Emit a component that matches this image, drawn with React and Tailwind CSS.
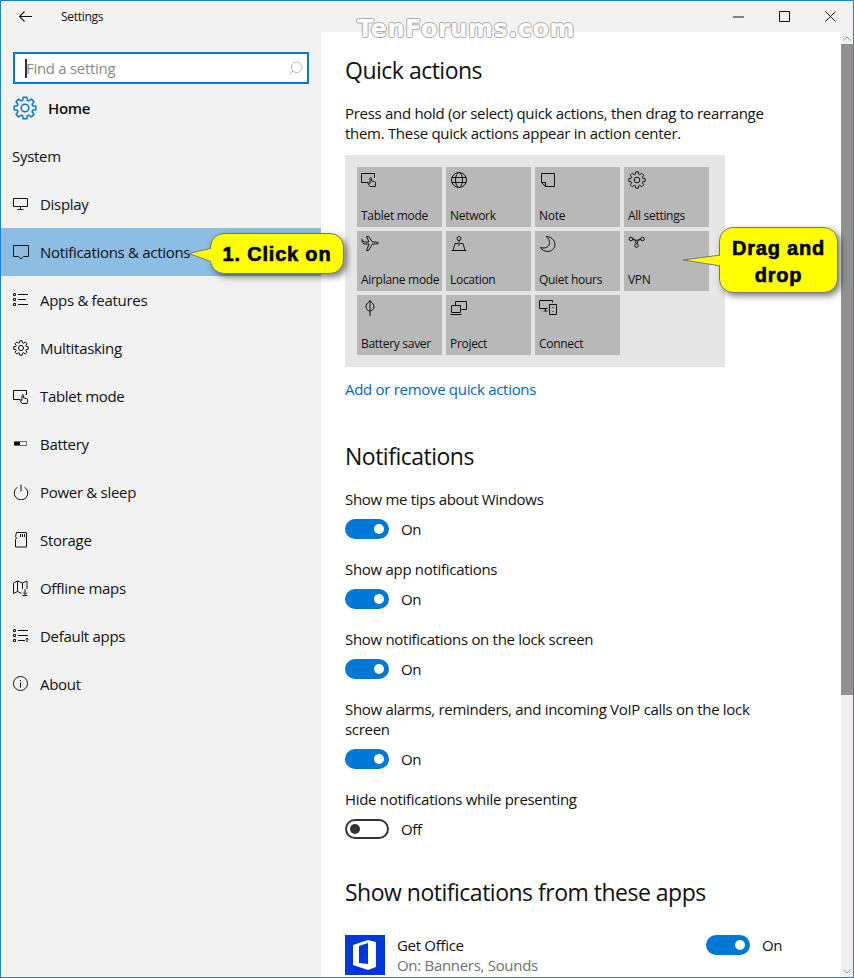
import { Search } from "lucide-react";

const gearPath = (() => {
  const pts = [];
  for (let i = 0; i < 8; i++) {
    const a = (i * Math.PI) / 4 - Math.PI / 2;
    [[-0.3, 8], [-0.17, 11], [0.17, 11], [0.3, 8]].forEach(([d, r]) => {
      pts.push((12 + r * Math.cos(a + d)).toFixed(2) + " " + (12 + r * Math.sin(a + d)).toFixed(2));
    });
  }
  return "M" + pts.join("L") + "z";
})();

const Gear = ({ size = 20, color = "#111", sw = 1.500 }) => (
  <svg width={size} height={size} viewBox="0 0 24 24" fill="none" stroke={color} strokeWidth={sw} strokeLinejoin="round">
    <path d={gearPath} />
    <circle cx="12" cy="12" r="3.800" />
  </svg>
);

const base = { width: 16, height: 16, viewBox: "0 0 16 16", fill: "none", stroke: "#111", strokeWidth: 1 };

const TabletIcon = () => (
  <svg {...base}>
    <path d="M7 11.500H.5v-9h13V7" />
    <path d="M9 15.500l-1.800-2.700c-.5-.9.5-1.500 1.200-.8l.6.6V7.500c0-1.200 1.600-1.200 1.600 0V10l3 .6c.8.2 1.100.8 1 1.600l-.4 3.300z" />
  </svg>
);
const icons = {
  display: (
    <svg {...base}><path d="M.5 2.500h14v8H.5zM7.500 10.500v3M4.500 13.500h6" /></svg>
  ),
  notif: (
    <svg {...base}><path d="M.5 1.500h15v11h-5l-2.500 2.500-2.500-2.500h-5z" /></svg>
  ),
  apps: (
    <svg {...base}><path d="M.5 1.500h2v2h-2zM.5 6.500h2v2h-2zM.5 11.500h2v2h-2zM5 2.500h10M5 7.500h8M5 12.500h10" /></svg>
  ),
  multi: <Gear size={16} />,
  tablet: <TabletIcon />,
  battery: (
    <svg {...base}><path d="M1.500 5.500h12v4h-12z" stroke="#666" /><path d="M1 7.500h6" stroke="#111" strokeWidth="3" /></svg>
  ),
  power: (
    <svg {...base}><path d="M4.500 3.200a6.800 6.800 0 1 0 7 0M8 .5v7" /></svg>
  ),
  storage: (
    <svg {...base}><path d="M3.500.5h10v14.500h-11V7.500l1-1.500-1-1.500zM7.500 2v3M9.500 2v3M11.500 2v3" /></svg>
  ),
  maps: (
    <svg {...base}><path d="M.5 3l4-2 5 2 4.500-2v8M.5 3v10.500l4-2 4 2M4.500 1v10.500M9.500 3v6M12 9v5M10 12.500l2 2 2-2M9.500 15.500h5" /></svg>
  ),
  defaults: (
    <svg {...base}><path d="M.5 1.500h2v2h-2zM.5 6.500h2v2h-2zM.5 11.500h2v2h-2zM5 2.500h10M5 7.500h10M5 12.500h7M14 14v-4M12.500 11.500L14 10l1.500 1.500" /></svg>
  ),
  about: (
    <svg {...base}><circle cx="7.500" cy="7.500" r="7" /><path d="M7.500 6.500v5M7.500 4v1.200" /></svg>
  ),
};

const navItems = [
  ["Display", icons.display],
  ["Notifications & actions", icons.notif, true],
  ["Apps & features", icons.apps],
  ["Multitasking", icons.multi],
  ["Tablet mode", icons.tablet],
  ["Battery", icons.battery],
  ["Power & sleep", icons.power],
  ["Storage", icons.storage],
  ["Offline maps", icons.maps],
  ["Default apps", icons.defaults],
  ["About", icons.about],
];

const t = { ...base, width: 18, height: 18, viewBox: "0 0 18 18" };
const tiles = [
  ["Tablet mode", <TabletIcon />],
  ["Network", <svg {...t}><circle cx="9" cy="9" r="7.500" /><ellipse cx="9" cy="9" rx="3.500" ry="7.500" /><path d="M2 6.500h14M2 11.500h14" /></svg>],
  ["Note", <svg {...t}><path d="M2.500 2.500h13v13h-9l-4-4zM2.500 11.500h4v4" /></svg>],
  ["All settings", <Gear size={18} sw={1.300} />],
  ["Airplane mode", <svg {...t}><path d="M1 6.500l2 2.500h5l-2.500 6.500h2l4-6.500h3c2 0 3-.5 3-1s-1-1-3-1h-3l-4-5.500h-2L8 7H3L1 4.500z" /></svg>],
  ["Location", <svg {...t}><circle cx="9" cy="3.500" r="2" /><path d="M9 5.500V11M1.500 15.500h15M3 15.500L5 8.500h3M10 8.500h3l2 7" /></svg>],
  ["Quiet hours", <svg {...t}><path d="M7 1.500c5 0 9 3.500 9 8 0 4-3.500 7-7.500 7-3 0-5.500-1.500-7-4 5 1.500 9-.5 9-5 0-2.500-1.500-4.500-3.500-6z" /></svg>],
  ["VPN", <svg {...t}><circle cx="3" cy="4" r="1.800" /><circle cx="14.500" cy="4" r="1.800" /><circle cx="8.500" cy="10.500" r="1.800" /><path d="M4.800 4c3 0 3 2 3.200 4.800M12.700 4c-3 0-2.500 1.500-3.500 4.700M4.800 4.500c2 1 5 1 7.900 0" /></svg>],
  ["Battery saver", <svg {...t}><path d="M9 2c3 2 4 4 4 6s-2 4-4 4-4-2-4-4 1-4 4-6zM9 1v16" /></svg>],
  ["Project", <svg {...t}><path d="M5.500 6V2.500h11v8h-5M1.500 6.500h9v7h-9zM.5 15.500h11" /></svg>],
  ["Connect", <svg {...t}><path d="M.5 1.500h13v2M.5 1.500v8h8M4.500 12h4M6.500 9.500V12M10.500 5.500h7v10h-7zM14 8v1M14 12v1" /></svg>],
];

const Toggle = ({ on = true }) => (
  <div className="flex items-center gap-3">
    {on ? (
      <div className="w-11 h-5 rounded-full bg-[#0078d7] flex items-center justify-end pr-[5px]">
        <div className="w-[10px] h-[10px] rounded-full bg-white" />
      </div>
    ) : (
      <div className="w-11 h-5 rounded-full border-2 border-[#333] flex items-center pl-[3px]">
        <div className="w-[10px] h-[10px] rounded-full bg-[#333]" />
      </div>
    )}
    <span className="text-[15px] leading-5 text-[#111]">{on ? "On" : "Off"}</span>
  </div>
);

const Setting = ({ label, on, className = "" }) => (
  <div className={"w-[410px] " + className}>
    <p className="text-[15px] leading-5 mb-[10px] text-[#111]">{label}</p>
    <Toggle on={on} />
  </div>
);

const Callout = ({ bodyClass, tail, children }) => (
  <>
    <div className={"absolute bg-[#ffff00] border border-[#777] rounded-[14px] shadow-[3px_3px_6px_rgba(0,0,0,0.5)] flex items-center justify-center text-center font-bold text-black text-[20px] leading-[27px] tracking-[0.8px] [-webkit-text-stroke:0.6px_black] " + bodyClass} style={{ fontFamily: '"Liberation Sans", sans-serif' }}>
      {children}
    </div>
    {tail}
  </>
);

export default function App() {
  return (
    <div className="relative w-[854px] h-[978px] overflow-hidden border border-[#1883d7] bg-[#f2f2f2] flex flex-col text-[#111] tracking-[-0.3px]" style={{ fontFamily: '"Open Sans", sans-serif' }}>
      <div className="h-[31px] shrink-0 flex items-center">
        <svg className="ml-[18px]" width="13" height="11" viewBox="0 0 13 11" fill="none" stroke="#111" strokeWidth="1.100"><path d="M5.500.5l-5 5 5 5M.5 5.500H13" /></svg>
        <span className="ml-[29px] text-xs">Settings</span>
        <div className="ml-auto flex items-center">
          <svg className="mr-[35px]" width="11" height="2" viewBox="0 0 11 2" stroke="#111"><path d="M0 1h11" /></svg>
          <svg className="mr-[35px]" width="11" height="11" viewBox="0 0 11 11" fill="none" stroke="#111"><path d="M.5.5h10v10H.5z" /></svg>
          <svg className="mr-[17px]" width="11" height="11" viewBox="0 0 11 11" fill="none" stroke="#111"><path d="M.5.5l10 10M10.500.5l-10 10" /></svg>
        </div>
      </div>

      <div className="flex flex-1 min-h-0">
        <aside className="w-[320px] shrink-0">
          <div className="mx-3 mt-[20px] h-8 border-2 border-[#0078d7] bg-white flex items-center pl-[10px] pr-[3px]">
            <span className="w-[2px] h-[19px] bg-[#333] shrink-0" />
            <span className="-ml-px text-[15px] text-[#8a8a8a]">Find a setting</span>
            <Search size={16} strokeWidth={1} className="ml-auto text-[#999] -scale-x-100" />
          </div>
          <div className="flex items-center h-6 mt-[12px] ml-3">
            <Gear size={24} color="#0078d7" sw={1.500} />
            <span className="ml-[11px] text-[15px] font-semibold">Home</span>
          </div>
          <div className="ml-[11px] mt-[26px] text-[15px] leading-5">System</div>
          <nav className="mt-[14px]">
            {navItems.map(([label, icon, active]) => (
              <div key={label} className={"h-12 flex items-center pl-3 " + (active ? "bg-[#8ebde4]" : "")}>
                <span className="w-4 h-4 flex items-center justify-center shrink-0">{icon}</span>
                <span className="ml-[11px] text-[15px]">{label}</span>
              </div>
            ))}
          </nav>
        </aside>

        <main className="flex-1 min-w-0 bg-white pl-6 overflow-hidden">
          <h2 className="text-[23px] leading-8 mt-[22px] tracking-[-0.5px]">Quick actions</h2>
          <p className="text-[15px] leading-5 mt-[17px] w-[430px]">Press and hold (or select) quick actions, then drag to rearrange them. These quick actions appear in action center.</p>
          <div className="mt-[12px] w-[380px] h-[212px] bg-[#e6e6e6] p-3 grid grid-cols-[85px_85px_85px_85px] grid-rows-[60px_60px_60px] gap-1">
            {tiles.map(([label, icon]) => (
              <div key={label} className="bg-[#b8b8b8] flex flex-col justify-between pl-1 pb-[3px] pt-1">
                <span className="h-[18px] flex items-start">{icon}</span>
                <span className="text-xs leading-4 whitespace-nowrap">{label}</span>
              </div>
            ))}
          </div>
          <a className="block mt-[12px] text-[15px] leading-5 text-[#0067c0]">Add or remove quick actions</a>

          <h2 className="text-[23px] leading-8 mt-[41px] tracking-[-0.5px]">Notifications</h2>
          <Setting label="Show me tips about Windows" on className="mt-[17px]" />
          <Setting label="Show app notifications" on className="mt-[20px]" />
          <Setting label="Show notifications on the lock screen" on className="mt-[20px]" />
          <Setting label="Show alarms, reminders, and incoming VoIP calls on the lock screen" on className="mt-[20px]" />
          <Setting label="Hide notifications while presenting" on={false} className="mt-[20px]" />

          <h2 className="text-[23px] leading-8 mt-[37px] tracking-[-0.5px]">Show notifications from these apps</h2>
          <div className="mt-[27px] flex items-start">
            <div className="w-10 h-10 bg-[#0037da] flex items-center justify-center shrink-0">
              <svg width="24" height="30" viewBox="0 0 24 30" fill="white"><path d="M0 5L15 0l8 2v25l-8 3-15-5zM15 3L6 6v17l9 1z" fillRule="evenodd" /></svg>
            </div>
            <div className="ml-3 w-[309px]">
              <p className="text-[15px] leading-5">Get Office</p>
              <p className="text-[15px] leading-5 text-[#707070]">On: Banners, Sounds</p>
            </div>
            <Toggle />
          </div>
        </main>

        <div className="w-3 shrink-0 bg-[#f0f0f0] flex flex-col">
          <div className="h-3 text-[#999] flex items-center justify-center">
            <svg width="8" height="5" viewBox="0 0 8 5" fill="none" stroke="currentColor"><path d="M.5 4.500L4 1l3.500 3.500" /></svg>
          </div>
          <div className="h-[651px] bg-[#919191]" />
          <div className="mt-auto h-3 text-[#999] flex items-center justify-center">
            <svg width="8" height="5" viewBox="0 0 8 5" fill="none" stroke="currentColor"><path d="M.5.5L4 4l3.500-3.500" /></svg>
          </div>
        </div>
      </div>

      <div className="absolute left-[356px] top-[12px] text-[24px] leading-8 font-bold tracking-[0.5px] text-white [text-shadow:1px_0_0_#aaa,-1px_0_0_#aaa,0_1px_0_#aaa,0_-1px_0_#aaa]" style={{ fontFamily: '"DejaVu Sans", sans-serif' }}>TenForums.com</div>

      <Callout
        bodyClass="left-[209px] top-[232px] w-[134px] h-[41px] pt-[2px]"
        tail={<svg className="absolute left-[187px] top-[240px]" width="26" height="26" viewBox="0 0 26 26"><path d="M24 7L1 12.500 24 21z" fill="#ffff00" stroke="#777" /><path d="M23 6h4v16h-4z" fill="#ffff00" /></svg>}
      >
        1. Click on
      </Callout>
      <Callout
        bodyClass="left-[718px] top-[226px] w-[119px] h-[66px] pt-[3px]"
        tail={<svg className="absolute left-[681px] top-[245px]" width="42" height="26" viewBox="0 0 42 26"><path d="M39 9L1 14 39 20z" fill="#ffff00" stroke="#777" /><path d="M38 8h5v13h-5z" fill="#ffff00" /></svg>}
      >
        <span>Drag and<br />drop</span>
      </Callout>
    </div>
  );
}
